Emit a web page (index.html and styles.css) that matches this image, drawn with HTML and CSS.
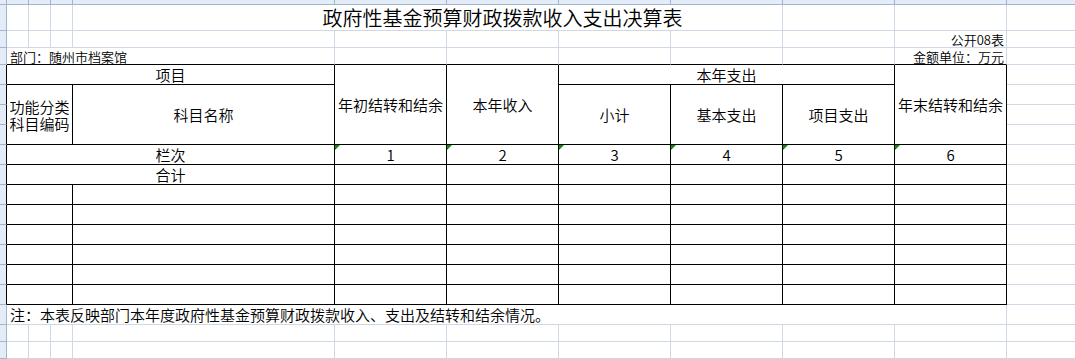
FILE: index.html
```html
<!DOCTYPE html>
<html lang="zh-CN">
<head>
<meta charset="utf-8">
<title>政府性基金预算财政拨款收入支出决算表</title>
<link rel="stylesheet" href="styles.css">
</head>
<body>
<div class="sheet">
  <!-- column header strip -->
  <div class="c h"></div>
  <div class="c h"></div>
  <div class="c h"></div>
  <div class="c h"></div>
  <div class="c h"></div>
  <div class="c h"></div>
  <div class="c h"></div>
  <div class="c h"></div>
  <div class="c h"></div>
  <div class="c h"></div>
  <div class="c h"></div>
  <div class="c h"></div>

  <!-- row 1: title -->
  <div class="c s"></div>
  <div class="c"></div><div class="c"></div><div class="c"></div>
  <div class="c x5 title">政府性基金预算财政拨款收入支出决算表</div>
  <div class="c"></div><div class="c"></div><div class="c"></div>

  <!-- row 2 -->
  <div class="c s"></div>
  <div class="c"></div><div class="c"></div><div class="c"></div><div class="c"></div>
  <div class="c"></div><div class="c"></div><div class="c"></div><div class="c"></div><div class="c"></div>
  <div class="c small right">公开08表</div>
  <div class="c"></div>

  <!-- row 3 -->
  <div class="c s"></div>
  <div class="c x4 kb small left">部门：随州市档案馆</div>
  <div class="c kb"></div><div class="c kb"></div><div class="c kb"></div><div class="c kb"></div><div class="c kb"></div>
  <div class="c kb small right">金额单位：万元</div>
  <div class="c"></div>

  <!-- row 4 -->
  <div class="c s sk"></div>
  <div class="c x4 k ctr">项目</div>
  <div class="c y4 k ctr">年初结转和结余</div>
  <div class="c y4 k ctr">本年收入</div>
  <div class="c x3 k ctr">本年支出</div>
  <div class="c y4 k ctr">年末结转和结余</div>
  <div class="c"></div>

  <!-- row 5 -->
  <div class="c s sk"></div>
  <div class="c x3 y3 k ctr stack"><span>功能分类</span><span>科目编码</span></div>
  <div class="c y3 k ctr">科目名称</div>
  <div class="c y3 k ctr">小计</div>
  <div class="c y3 k ctr">基本支出</div>
  <div class="c y3 k ctr">项目支出</div>
  <div class="c"></div>

  <!-- rows 6, 7 -->
  <div class="c s sk"></div><div class="c"></div>
  <div class="c s sk"></div><div class="c"></div>

  <!-- row 8: 栏次 -->
  <div class="c s sk"></div>
  <div class="c x4 k ctr">栏次</div>
  <div class="c k ctr tri">1</div>
  <div class="c k ctr tri">2</div>
  <div class="c k ctr tri">3</div>
  <div class="c k ctr tri">4</div>
  <div class="c k ctr tri">5</div>
  <div class="c k ctr tri">6</div>
  <div class="c"></div>

  <!-- row 9: 合计 -->
  <div class="c s sk"></div>
  <div class="c x4 k ctr">合计</div>
  <div class="c k"></div><div class="c k"></div><div class="c k"></div><div class="c k"></div><div class="c k"></div><div class="c k"></div>
  <div class="c"></div>

  <!-- rows 10-15: empty data rows -->
  <div class="c s sk"></div><div class="c x3 k"></div><div class="c k"></div>
  <div class="c k"></div><div class="c k"></div><div class="c k"></div><div class="c k"></div><div class="c k"></div><div class="c k"></div>
  <div class="c"></div>

  <div class="c s sk"></div><div class="c x3 k"></div><div class="c k"></div>
  <div class="c k"></div><div class="c k"></div><div class="c k"></div><div class="c k"></div><div class="c k"></div><div class="c k"></div>
  <div class="c"></div>

  <div class="c s sk"></div><div class="c x3 k"></div><div class="c k"></div>
  <div class="c k"></div><div class="c k"></div><div class="c k"></div><div class="c k"></div><div class="c k"></div><div class="c k"></div>
  <div class="c"></div>

  <div class="c s sk"></div><div class="c x3 k"></div><div class="c k"></div>
  <div class="c k"></div><div class="c k"></div><div class="c k"></div><div class="c k"></div><div class="c k"></div><div class="c k"></div>
  <div class="c"></div>

  <div class="c s sk"></div><div class="c x3 k"></div><div class="c k"></div>
  <div class="c k"></div><div class="c k"></div><div class="c k"></div><div class="c k"></div><div class="c k"></div><div class="c k"></div>
  <div class="c"></div>

  <div class="c s sk"></div><div class="c x3 k"></div><div class="c k"></div>
  <div class="c k"></div><div class="c k"></div><div class="c k"></div><div class="c k"></div><div class="c k"></div><div class="c k"></div>
  <div class="c"></div>

  <!-- row 16: note -->
  <div class="c s"></div>
  <div class="c x10 note">注：本表反映部门本年度政府性基金预算财政拨款收入、支出及结转和结余情况。</div>
  <div class="c"></div>

  <!-- rows 17-19: blank sheet rows -->
  <div class="c s"></div><div class="c"></div><div class="c"></div><div class="c"></div><div class="c"></div>
  <div class="c"></div><div class="c"></div><div class="c"></div><div class="c"></div><div class="c"></div><div class="c"></div>
  <div class="c"></div>

  <div class="c s"></div><div class="c"></div><div class="c"></div><div class="c"></div><div class="c"></div>
  <div class="c"></div><div class="c"></div><div class="c"></div><div class="c"></div><div class="c"></div><div class="c"></div>
  <div class="c"></div>

  <div class="c s"></div><div class="c"></div><div class="c"></div><div class="c"></div><div class="c"></div>
  <div class="c"></div><div class="c"></div><div class="c"></div><div class="c"></div><div class="c"></div><div class="c"></div>
  <div class="c"></div>
</div>
</body>
</html>
```
FILE: styles.css
```css
* {
  box-sizing: border-box;
}

html,
body {
  margin: 0;
  padding: 0;
  background: #ffffff;
  overflow: hidden;
}

body {
  width: 1075px;
  height: 359px;
  font-family: "Noto Sans CJK SC", "Noto Sans", sans-serif;
  font-weight: 350;
  color: #000000;
}

.sheet {
  display: grid;
  grid-template-columns: 7px 22px 22px 22px 262px repeat(6, 112px) 120px;
  grid-template-rows: 5px 26px 17px 17px repeat(12, 20px) 20px 17px 17px 17px;
  width: max-content;
}

/* base cell: gridlines on right and bottom */
.c {
  display: flex;
  min-width: 0;
  min-height: 0;
  border-right: 1px solid #d0d7e5;
  border-bottom: 1px solid #d0d7e5;
  font-size: 15px;
  line-height: 17px;
  white-space: nowrap;
}

/* spans */
.x3 { grid-column: span 3; }
.x4 { grid-column: span 4; }
.x5 { grid-column: span 5; }
.x10 { grid-column: span 10; }
.y3 { grid-row: span 3; }
.y4 { grid-row: span 4; }

/* black table borders */
.k {
  border-right-color: #000000;
  border-bottom-color: #000000;
}

.kb {
  border-bottom-color: #000000;
}

/* column header strip */
.h {
  background: #e4ecf7;
  border-right-color: #9eb6ce;
  border-bottom-color: #9eb6ce;
}

/* row header strip */
.s {
  background: #e4ecf7;
  border-right-color: #9eb6ce;
  border-bottom-color: #9eb6ce;
}

.s.sk {
  border-right-color: #000000;
}

/* text cells */
.title {
  font-size: 20px;
  line-height: 20px;
  align-items: flex-end;
  justify-content: center;
  padding-left: 150px;
  padding-bottom: 2px;
}

.small {
  font-size: 13px;
  line-height: 13px;
  align-items: flex-end;
  padding-bottom: 1px;
}

.right {
  justify-content: flex-end;
  padding-right: 2px;
}

.left {
  padding-left: 3px;
}

.ctr {
  justify-content: center;
  align-items: center;
  text-align: center;
}

.stack {
  flex-direction: column;
  gap: 0;
}

.stack span {
  line-height: 17px;
}

.note {
  align-items: center;
  padding-left: 3px;
}

/* green "number stored as text" indicator */
.tri {
  position: relative;
}

.tri::before {
  content: "";
  position: absolute;
  left: 0;
  top: 0;
  border-top: 5px solid #108a10;
  border-right: 5px solid transparent;
}
```
